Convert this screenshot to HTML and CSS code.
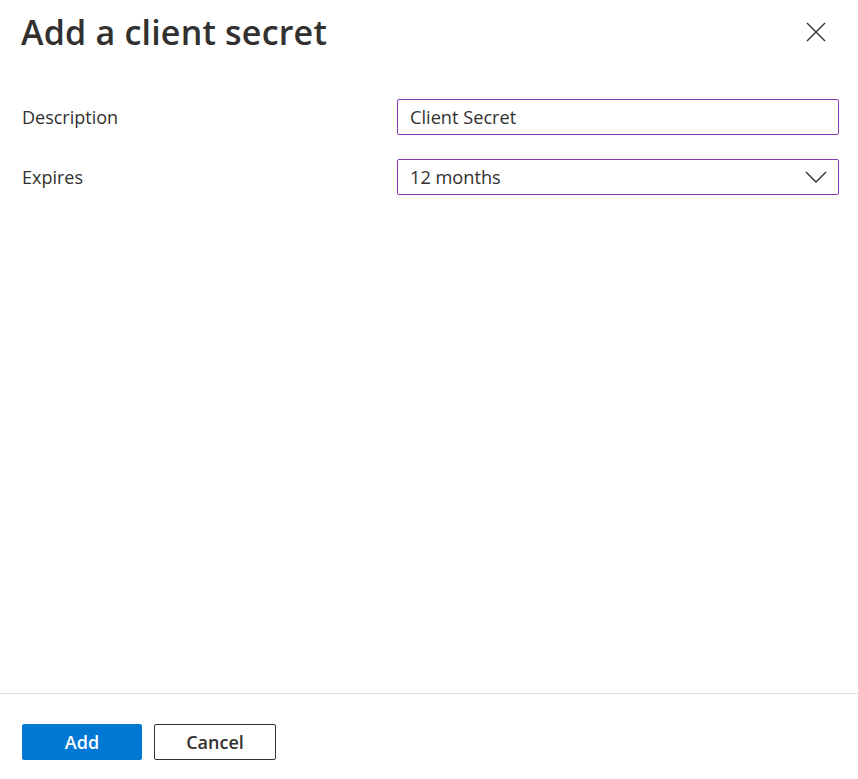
FILE: index.html
```html
<!DOCTYPE html>
<html lang="en">
<head>
    <meta charset="UTF-8">
    <meta name="viewport" content="width=device-width, initial-scale=1.0">
    <title>Add a client secret</title>
    <link rel="stylesheet" href="styles.css">
</head>
<body>
    <div class="panel">
        <div class="panel-header">
            <h1>Add a client secret</h1>
            <button class="close-btn" aria-label="Close">
                <svg width="20" height="20" viewBox="0 0 20 20">
                    <path d="M1 1 L19 19 M19 1 L1 19" stroke="#323130" stroke-width="1.4" fill="none"/>
                </svg>
            </button>
        </div>

        <div class="panel-body">
            <div class="form-row">
                <label for="desc">Description</label>
                <div class="field">Client Secret</div>
            </div>
            <div class="form-row">
                <label>Expires</label>
                <div class="field select">
                    <span>12 months</span>
                    <svg width="22" height="12" viewBox="0 0 22 12">
                        <path d="M1 1 L11 11 L21 1" stroke="#323130" stroke-width="1.4" fill="none"/>
                    </svg>
                </div>
            </div>
        </div>

        <div class="panel-footer">
            <button class="btn primary">Add</button>
            <button class="btn">Cancel</button>
        </div>
    </div>
</body>
</html>
```

FILE: styles.css
```css
body {
    margin: 0;
    font-family: 'Open Sans', 'Noto Sans', sans-serif;
    color: #323130;
    background: white;
}

.panel {
    height: 100vh;
    display: flex;
    flex-direction: column;
}

.panel-header {
    display: flex;
    justify-content: space-between;
    align-items: flex-start;
    padding: 8px 32px 0 21px;
}

h1 {
    margin: 0;
    font-size: 34px;
    font-weight: 600;
    line-height: 48px;
    letter-spacing: 0.2px;
    color: #323130;
}

.close-btn {
    background: none;
    border: none;
    padding: 0;
    margin-top: 14px;
    width: 20px;
    height: 20px;
}

.panel-body {
    flex: 1;
    padding: 43px 19px 0 22px;
    display: flex;
    flex-direction: column;
    gap: 24px;
}

.form-row {
    display: grid;
    grid-template-columns: 375px 1fr;
    align-items: center;
}

.form-row label {
    font-size: 18px;
}

.field {
    height: 36px;
    box-sizing: border-box;
    border: 1px solid #8a3ab0;
    border-radius: 2px;
    padding: 0 12px;
    font-size: 18.2px;
    display: flex;
    align-items: center;
}

.field.select {
    justify-content: space-between;
    padding-right: 11px;
}

.panel-footer {
    border-top: 1px solid #e1dfdd;
    padding: 30px 22px 19px;
    display: flex;
    gap: 12px;
}

.btn {
    width: 122px;
    height: 36px;
    font-family: inherit;
    font-size: 18px;
    font-weight: 600;
    color: #323130;
    background: white;
    border: 1px solid #323130;
    border-radius: 2px;
}

.btn.primary {
    width: 120px;
    background: #0078d4;
    border-color: #0078d4;
    color: white;
}
```
